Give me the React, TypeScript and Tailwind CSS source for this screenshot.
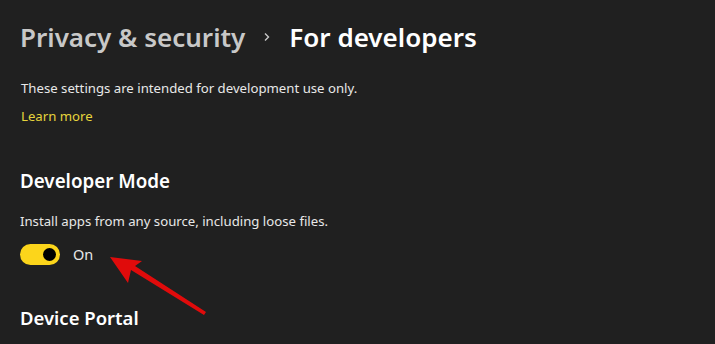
import React from 'react';

const font = { fontFamily: '"Noto Sans", "Open Sans", sans-serif' };

function Arrow() {
    return (
        <svg className="absolute left-0 top-0" width="715" height="344" viewBox="0 0 715 344">
            <polygon points="110,257 142,261 135,266 206,312 204,315 131,270 128,283" fill="#e00b0b" />
        </svg>
    );
}

export default function App() {
    return (
        <div className="relative w-[715px] h-[344px] overflow-hidden bg-[#202020] text-white" style={font}>
            <div className="flex items-center pl-[20px] pt-[15px] h-[44px] box-content">
                <span className="text-[26px] font-semibold text-[#c8c8c8]">Privacy &amp; security</span>
                <span className="mx-[17px] text-[#c8c8c8]">
                    <svg width="10" height="10" viewBox="0 0 10 10">
                        <path d="M3 1.5 L6.5 5 L3 8.5" stroke="#c8c8c8" strokeWidth="1.4" fill="none" />
                    </svg>
                </span>
                <span className="text-[26px] font-semibold text-white">For developers</span>
            </div>

            <div className="pl-[21px] pt-[19px]">
                <p className="text-[13.2px] leading-[20px] text-[#e8e8e8]">
                    These settings are intended for development use only.
                </p>
                <p className="mt-[8px] text-[13.2px] leading-[20px] text-[#e6d43c]">Learn more</p>
            </div>

            <div className="pl-[20px] pt-[42px]">
                <h2 className="text-[18.8px] leading-[26px] font-semibold">Developer Mode</h2>
                <p className="mt-[17px] text-[13.2px] leading-[20px] text-[#e8e8e8]">
                    Install apps from any source, including loose files.
                </p>
                <div className="mt-[13px] flex items-center gap-[13px]">
                    <div className="w-[40px] h-[21px] rounded-full bg-[#fcd51b] flex items-center justify-end pr-[4px]">
                        <div className="w-[13px] h-[13px] rounded-full bg-black" />
                    </div>
                    <span className="text-[14.5px] text-[#e8e8e8]">On</span>
                </div>
                <h2 className="mt-[39px] text-[18.5px] leading-[26px] font-semibold">Device Portal</h2>
            </div>

            <Arrow />
        </div>
    );
}
